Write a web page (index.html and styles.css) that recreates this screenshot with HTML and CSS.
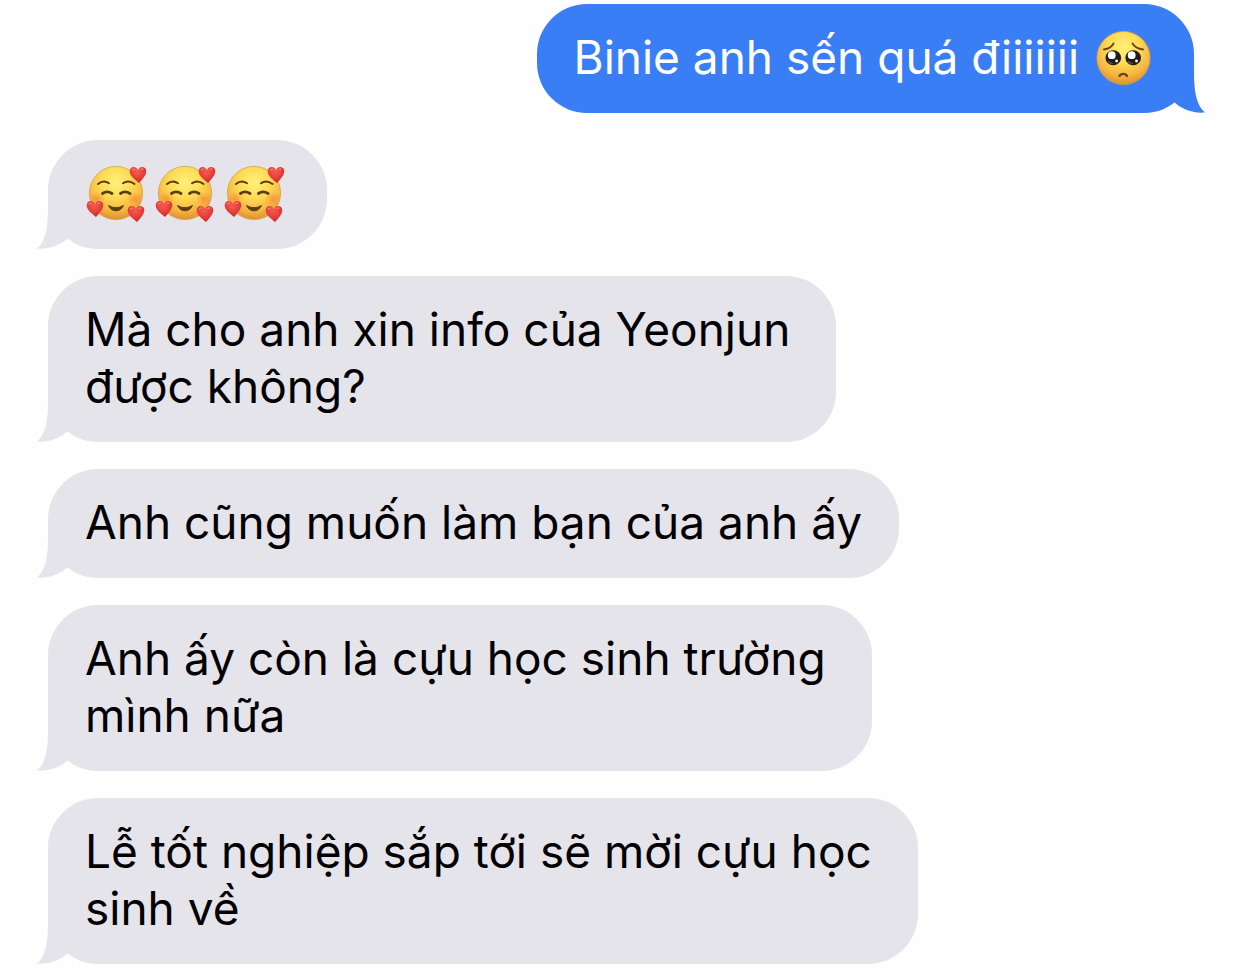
FILE: index.html
```html
<!DOCTYPE html>
<html lang="vi">
<head>
  <meta charset="UTF-8">
  <meta name="viewport" content="width=device-width, initial-scale=1">
  <title>Messages</title>
  <link rel="stylesheet" href="styles.css">
</head>
<body>

  <!-- shapes shared by the bubbles -->
  <svg class="defs" width="0" height="0" aria-hidden="true">
    <defs>
      <radialGradient id="skin" cx="50%" cy="30%" r="72%">
        <stop offset="0" stop-color="#fff17a"/>
        <stop offset="0.4" stop-color="#fcdc56"/>
        <stop offset="0.75" stop-color="#f5b541"/>
        <stop offset="1" stop-color="#d98c2c"/>
      </radialGradient>
      <radialGradient id="blush">
        <stop offset="0" stop-color="#f7702f" stop-opacity="0.5"/>
        <stop offset="1" stop-color="#f7702f" stop-opacity="0"/>
      </radialGradient>
      <radialGradient id="red" cx="45%" cy="30%" r="70%">
        <stop offset="0" stop-color="#f45c50"/>
        <stop offset="0.6" stop-color="#e53d39"/>
        <stop offset="1" stop-color="#c52a2b"/>
      </radialGradient>
    </defs>
    <symbol id="tail" viewBox="0 0 40 50">
      <path d="M11 0V8C11 28 9 42 0 49.5C13 50.5 24 46 32 38L40 30V0Z"/>
    </symbol>
    <symbol id="heart" viewBox="0 0 18 18">
      <path d="M10 17C5 13 1 10 .7 5.8C.5 2.5 2.6 .9 4.8 1C6.8 1 8.3 2.3 9 4.2C9.8 2 11.5 .9 13.5 1.1C16 1.3 17.7 3.4 17.2 6.2C16.5 10.2 13 13.5 10 17Z" fill="url(#red)"/>
      <path d="M3 4.2Q4 2.8 5.4 3M11.6 3.6Q12.6 2.6 14 3" fill="none" stroke="#ff9b8e" stroke-width="1" stroke-linecap="round"/>
    </symbol>
    <symbol id="love" viewBox="0 0 64 60">
      <circle cx="31" cy="29" r="26.6" fill="url(#skin)" stroke="#d9a040" stroke-width="0.8"/>
      <ellipse cx="12" cy="35" rx="8" ry="7" fill="url(#blush)"/>
      <ellipse cx="50" cy="35" rx="8" ry="7" fill="url(#blush)"/>
      <g fill="none" stroke="#5f3d10" stroke-linecap="round">
        <path d="M13 20Q18.5 15.5 24 19.3M38 19.3Q43.5 15.5 49.5 20" stroke-width="2"/>
        <path d="M17.5 29.5Q22 26.3 27 29.5M35.5 29.5Q40 26.3 45 29.5" stroke-width="2.8"/>
      </g>
      <path d="M23.5 41.5Q31 46 38.5 41.5Q36 46.8 31 46.8Q26 46.8 23.5 41.5Z" fill="#5f3d10" stroke="#5f3d10" stroke-linejoin="round"/>
      <use href="#heart" x="44" y="2" width="18" height="18"/>
      <use href="#heart" x="1" y="36" width="18" height="18"/>
      <use href="#heart" x="42" y="41" width="18" height="18"/>
    </symbol>
    <symbol id="pleading" viewBox="0 0 58 60">
      <circle cx="28.5" cy="29" r="26.6" fill="url(#skin)" stroke="#d9a040" stroke-width="0.8"/>
      <g fill="none" stroke="#70430f" stroke-width="1.9" stroke-linecap="round">
        <path d="M9 20.5Q16 19.5 18.5 14.5M37.5 14.5Q40.5 19.5 48 20.5"/>
        <path d="M24.5 47Q25.5 44.8 28.3 44.8Q31 44.8 32 47" stroke-width="2.2"/>
      </g>
      <g fill="#251a18">
        <ellipse cx="18.3" cy="28.7" rx="7.8" ry="7.5"/>
        <ellipse cx="38.2" cy="28.7" rx="7.8" ry="7.5"/>
      </g>
      <path d="M13.5 32.5Q15 34.3 17.5 34.5M33.5 32.5Q35 34.3 37.5 34.5" fill="none" stroke="#5a5860" stroke-width="1.2" stroke-linecap="round"/>
      <g fill="#fff">
        <circle cx="16.8" cy="26.2" r="3.9"/>
        <circle cx="36.7" cy="26.2" r="3.9"/>
        <circle cx="21.6" cy="32" r="1.4"/>
        <circle cx="41.5" cy="32" r="1.4"/>
      </g>
    </symbol>
  </svg>

  <main class="chat">
    <div class="bubble sent">
      <p>Binie anh sến quá điiiiiii <svg class="emoji pleading" role="img" aria-label="🥺"><use href="#pleading"/></svg></p>
      <svg class="tail" aria-hidden="true"><use href="#tail"/></svg>
    </div>

    <div class="bubble">
      <p class="emoji-row">
        <svg class="emoji" role="img" aria-label="🥰"><use href="#love"/></svg>
        <svg class="emoji" role="img" aria-label="🥰"><use href="#love"/></svg>
        <svg class="emoji" role="img" aria-label="🥰"><use href="#love"/></svg>
      </p>
      <svg class="tail" aria-hidden="true"><use href="#tail"/></svg>
    </div>

    <div class="bubble long">
      <p>Mà cho anh xin info của Yeonjun<br>được không?</p>
      <svg class="tail" aria-hidden="true"><use href="#tail"/></svg>
    </div>

    <div class="bubble">
      <p>Anh cũng muốn làm bạn của anh ấy</p>
      <svg class="tail" aria-hidden="true"><use href="#tail"/></svg>
    </div>

    <div class="bubble long">
      <p>Anh ấy còn là cựu học sinh trường<br>mình nữa</p>
      <svg class="tail" aria-hidden="true"><use href="#tail"/></svg>
    </div>

    <div class="bubble long">
      <p>Lễ tốt nghiệp sắp tới sẽ mời cựu học<br>sinh về</p>
      <svg class="tail" aria-hidden="true"><use href="#tail"/></svg>
    </div>
  </main>

</body>
</html>
```
FILE: styles.css
```css
body {
  margin: 0;
  background-color: #fefefe;
  font-family: Inter, "Liberation Sans", sans-serif;
  font-size: 46px;
  line-height: 57px;
  color: #000;
}

.defs {
  position: absolute;
}

.chat {
  display: flex;
  flex-direction: column;
  align-items: flex-start;
  gap: 27px;
  padding: 4px 48px;
}

.bubble {
  position: relative;
  padding: 25px 37px 27px;
  border-radius: 50px;
  background-color: #e5e4ea;
}

.bubble.long {
  padding-right: 46px;
}

.bubble p {
  margin: 0;
}

.bubble.sent {
  align-self: flex-end;
  background-color: #397ef5;
  color: #fff;
}

/* the tail hangs off the bottom corner */
.tail {
  position: absolute;
  left: -11px;
  bottom: 0;
  width: 40px;
  height: 50px;
  fill: #e5e4ea;
}

.sent .tail {
  left: auto;
  right: -11px;
  transform: scaleX(-1);
  fill: #397ef5;
}

.emoji {
  width: 64px;
  height: 60px;
}

.emoji.pleading {
  width: 58px;
  vertical-align: middle;
  margin: -8px 4px -4px 3px;
}

.bubble .emoji-row {
  display: flex;
  align-items: center;
  gap: 5px;
  height: 57px;
  padding-right: 3px;
}
```
